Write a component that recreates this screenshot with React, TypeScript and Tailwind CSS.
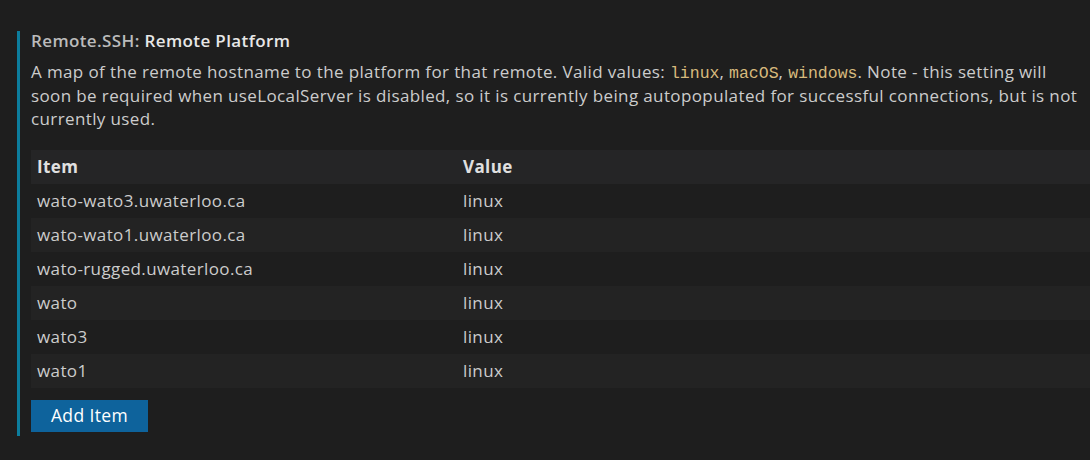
const ROWS = [
  { item: "wato-wato3.uwaterloo.ca", value: "linux" },
  { item: "wato-wato1.uwaterloo.ca", value: "linux" },
  { item: "wato-rugged.uwaterloo.ca", value: "linux" },
  { item: "wato", value: "linux" },
  { item: "wato3", value: "linux" },
  { item: "wato1", value: "linux" },
];

function Code({ children }: { children: string }) {
  return (
    <span className="font-['Liberation_Mono',monospace] text-[16.5px] leading-[1] tracking-normal text-[#d7ba7d]">
      {children}
    </span>
  );
}

export default function App() {
  return (
    <div className="min-h-screen bg-[#1e1e1e] pt-[31px] pl-[17px] font-['Open_Sans','Noto_Sans',sans-serif] tracking-[0.38px]">
      <div className="border-l-[3px] border-[#0c7d9d] pl-[11px] pb-[4px]">
        <div className="text-[17px] leading-[20px] font-semibold">
          <span className="text-[#bbbbbb]">Remote.SSH: </span>
          <span className="text-[#e7e7e7]">Remote Platform</span>
        </div>
        <div className="mt-[9px] text-[17px] leading-[23.5px] text-[#cccccc] pr-[10px]">
          A map of the remote hostname to the platform for that remote. Valid values: <Code>linux</Code>,{" "}
          <Code>macOS</Code>, <Code>windows</Code>. Note - this setting will soon be required when useLocalServer is
          disabled, so it is currently being autopopulated for successful connections, but is not currently used.
        </div>

        <div className="mt-[19px] text-[17px] text-[#cccccc]">
          <div className="flex h-[34px] items-center bg-[#252526] font-bold text-[#e0e0e0]">
            <div className="w-[432px] pl-[6px]">Item</div>
            <div className="flex-1">Value</div>
          </div>
          {ROWS.map((row, idx) => (
            <div
              key={idx}
              className={`flex h-[34px] items-center ${idx % 2 === 0 ? "bg-[#1e1e1e]" : "bg-[#232323]"}`}
            >
              <div className="w-[432px] pl-[6px]">{row.item}</div>
              <div className="flex-1">{row.value}</div>
            </div>
          ))}
        </div>

        <button className="mt-[12px] flex h-[32px] w-[117px] items-center justify-center bg-[#0e639c] text-[17.5px] text-white">
          Add Item
        </button>
      </div>
    </div>
  );
}
